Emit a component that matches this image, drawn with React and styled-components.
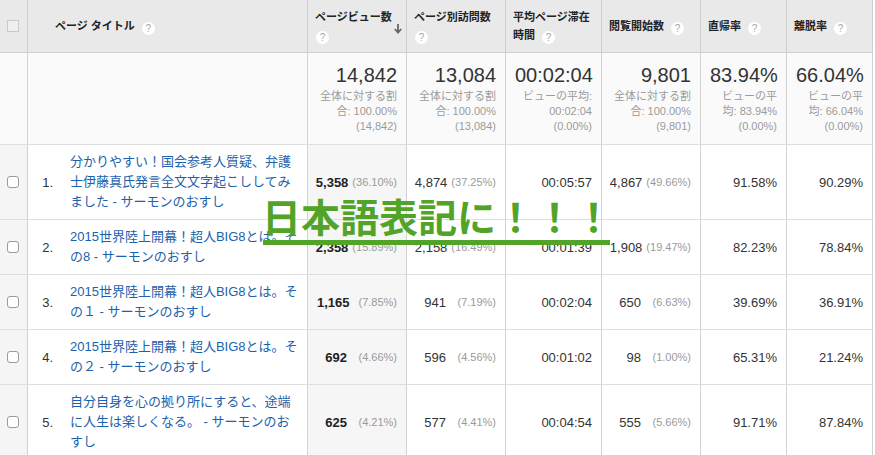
import React from "react";
import styled, { createGlobalStyle } from "styled-components";

const GlobalStyle = createGlobalStyle`
  body {
    margin: 0;
    background: #fff;
    font-family: "Liberation Sans", "Noto Sans CJK JP", sans-serif;
    color: #333;
  }
`;

const COLS = "28px 35px 245px 99px 99px 96px 99px 86px 86px";

const Page = styled.div`
  position: relative;
  width: 875px;
  height: 455px;
  overflow: hidden;
`;

const Table = styled.div`
  display: flex;
  flex-direction: column;
`;

const Row = styled.div`
  display: grid;
  grid-template-columns: ${COLS};
  width: 873px;
  border-bottom: 1px solid ${(p) => (p.$head ? "#cfcfcf" : "#dedede")};
  background: ${(p) => p.$bg || "#fff"};
`;

const HeadCell = styled.div`
  box-sizing: border-box;
  height: 52px;
  padding: 0 7px 0 ${(p) => p.$pl || 7}px;
  border-right: 1px solid #cfcfcf;
  display: flex;
  align-items: center;
  justify-content: space-between;
  grid-column: ${(p) => (p.$span ? `span ${p.$span}` : "auto")};
  font-family: "Liberation Sans", "Noto Sans CJK JP", sans-serif;
  font-size: 11px;
  font-weight: 700;
  line-height: 18px;
  color: #222;
`;

const HeadLabel = styled.div`
  flex: 1;
`;

const Line = styled.span`
  white-space: nowrap;
`;

const HeadBox = styled.span`
  display: block;
  width: 10px;
  height: 10px;
  border: 1px solid #c9c9c9;
  background: #efefef;
`;

const Help = styled.span`
  display: inline-flex;
  align-items: center;
  justify-content: center;
  width: 13px;
  height: 13px;
  border-radius: 50%;
  background: #fff;
  color: #a8a8a8;
  font-family: "Liberation Sans", sans-serif;
  font-size: 10px;
  font-weight: 400;
  line-height: 1;
  vertical-align: -2px;
  margin-left: ${(p) => (p.$nl ? 1 : 7)}px;
`;

const SortArrow = styled.svg`
  align-self: center;
  margin: 6px -3px 0 0;
  flex: none;
`;

const Cell = styled.div`
  box-sizing: border-box;
  padding: 7px 9px;
  border-right: 1px solid #d2d2d2;
  background: ${(p) => p.$bg || "transparent"};
  display: flex;
  align-items: center;
  justify-content: flex-end;
  font-size: 13px;
  color: #333;
`;

const CheckCell = styled(Cell)`
  padding: 0 0 0 7px;
  justify-content: flex-start;
`;

const Check = styled.span`
  display: block;
  box-sizing: border-box;
  width: 12px;
  height: 12px;
  border: 1px solid #9a9a9a;
  border-radius: 3px;
  background: #fff;
`;

const IndexCell = styled(Cell)`
  padding-right: 10px;
  border-right: none;
`;

const TitleCell = styled(Cell)`
  padding: 7px;
  justify-content: flex-start;
`;

const TitleLink = styled.a`
  color: #1b62ad;
  text-decoration: none;
  font-size: 13px;
  line-height: 20px;
`;

const Num = styled.span`
  font-weight: ${(p) => (p.$bold ? 700 : 400)};
  color: ${(p) => (p.$bold ? "#222" : "#333")};
`;

const Pct = styled.span`
  display: inline-block;
  width: 46px;
  margin-left: 4px;
  text-align: right;
  font-size: 11px;
  color: #9a9a9a;
`;

const SumCell = styled.div`
  box-sizing: border-box;
  padding: 10px 9px;
  border-right: 1px solid #d2d2d2;
  text-align: right;
  grid-column: ${(p) => (p.$span ? `span ${p.$span}` : "auto")};
`;

const SumBig = styled.div`
  font-size: 20px;
  line-height: 24px;
  color: #333;
`;

const SumSub = styled.div`
  margin-top: 2px;
  font-size: 11px;
  line-height: 15px;
  color: #9a9a9a;
`;

const Banner = styled.div`
  position: absolute;
  left: 262px;
  top: 196px;
  display: flex;
  flex-direction: column;
  pointer-events: none;
`;

const BannerText = styled.div`
  font-family: "Noto Sans CJK JP", sans-serif;
  font-weight: 700;
  font-size: 39px;
  line-height: 39px;
  color: #52a428;
  white-space: nowrap;
`;

const BannerLine = styled.div`
  width: 347px;
  height: 5px;
  margin: 5px 0 0 1px;
  background: #52a428;
`;

const heads = [
  { label: "ページビュー数", nl: true, sort: true },
  { label: "ページ別訪問数", nl: true },
  { label: "平均ページ滞在時間" },
  { label: "閲覧開始数" },
  { label: "直帰率" },
  { label: "離脱率" },
];

const summary = [
  ["14,842", "全体に対する割合: 100.00% (14,842)"],
  ["13,084", "全体に対する割合: 100.00% (13,084)"],
  ["00:02:04", "ビューの平均: 00:02:04 (0.00%)"],
  ["9,801", "全体に対する割合: 100.00% (9,801)"],
  ["83.94%", "ビューの平均: 83.94% (0.00%)"],
  ["66.04%", "ビューの平均: 66.04% (0.00%)"],
];

const rows = [
  {
    title: "分かりやすい！国会参考人質疑、弁護士伊藤真氏発言全文文字起こししてみました - サーモンのおすし",
    pv: ["5,358", "(36.10%)"],
    uv: ["4,874", "(37.25%)"],
    time: "00:05:57",
    ent: ["4,867", "(49.66%)"],
    bounce: "91.58%",
    exit: "90.29%",
  },
  {
    title: "2015世界陸上開幕！超人BIG8とは。その8 - サーモンのおすし",
    pv: ["2,358", "(15.89%)"],
    uv: ["2,158", "(16.49%)"],
    time: "00:01:39",
    ent: ["1,908", "(19.47%)"],
    bounce: "82.23%",
    exit: "78.84%",
  },
  {
    title: "2015世界陸上開幕！超人BIG8とは。その１ - サーモンのおすし",
    pv: ["1,165", "(7.85%)"],
    uv: ["941", "(7.19%)"],
    time: "00:02:04",
    ent: ["650", "(6.63%)"],
    bounce: "39.69%",
    exit: "36.91%",
  },
  {
    title: "2015世界陸上開幕！超人BIG8とは。その２ - サーモンのおすし",
    pv: ["692", "(4.66%)"],
    uv: ["596", "(4.56%)"],
    time: "00:01:02",
    ent: ["98", "(1.00%)"],
    bounce: "65.31%",
    exit: "21.24%",
  },
  {
    title: "自分自身を心の拠り所にすると、途端に人生は楽しくなる。 - サーモンのおすし",
    pv: ["625", "(4.21%)"],
    uv: ["577", "(4.41%)"],
    time: "00:04:54",
    ent: ["555", "(5.66%)"],
    bounce: "91.71%",
    exit: "87.84%",
  },
];

function HeaderRow() {
  return (
    <Row $head $bg="#e9e9e9">
      <HeadCell>
        <HeadBox />
      </HeadCell>
      <HeadCell $span={2} $pl={27}>
        <HeadLabel>
          ページ タイトル<Help>?</Help>
        </HeadLabel>
      </HeadCell>
      {heads.map((h) => (
        <HeadCell key={h.label}>
          <HeadLabel>
            {h.nl ? (
              <>
                <Line>{h.label}</Line>
                <br />
              </>
            ) : (
              h.label
            )}
            <Help $nl={h.nl}>?</Help>
          </HeadLabel>
          {h.sort && (
            <SortArrow width="8" height="10" viewBox="0 0 8 10">
              <path d="M4 0v8M0.8 5L4 8.6 7.2 5" stroke="#666" strokeWidth="1.8" fill="none" />
            </SortArrow>
          )}
        </HeadCell>
      ))}
    </Row>
  );
}

function NumCell({ value, bold, bg }) {
  return (
    <Cell $bg={bg}>
      <Num $bold={bold}>{value[0]}</Num>
      <Pct>{value[1]}</Pct>
    </Cell>
  );
}

function DataRow({ row, index }) {
  return (
    <Row>
      <CheckCell $bg="#f5f5f5">
        <Check />
      </CheckCell>
      <IndexCell>{index}.</IndexCell>
      <TitleCell>
        <TitleLink href="#">{row.title}</TitleLink>
      </TitleCell>
      <NumCell value={row.pv} bold bg="#f6f6f6" />
      <NumCell value={row.uv} />
      <Cell>{row.time}</Cell>
      <NumCell value={row.ent} />
      <Cell>{row.bounce}</Cell>
      <Cell>{row.exit}</Cell>
    </Row>
  );
}

export default function App() {
  return (
    <Page>
      <GlobalStyle />
      <Table>
        <HeaderRow />
        <Row $bg="#fafafa">
          <SumCell />
          <SumCell $span={2} />
          {summary.map(([big, sub]) => (
            <SumCell key={sub}>
              <SumBig>{big}</SumBig>
              <SumSub>{sub}</SumSub>
            </SumCell>
          ))}
        </Row>
        {rows.map((r, i) => (
          <DataRow key={i} row={r} index={i + 1} />
        ))}
      </Table>
      <Banner>
        <BannerText>日本語表記に！！！</BannerText>
        <BannerLine />
      </Banner>
    </Page>
  );
}
